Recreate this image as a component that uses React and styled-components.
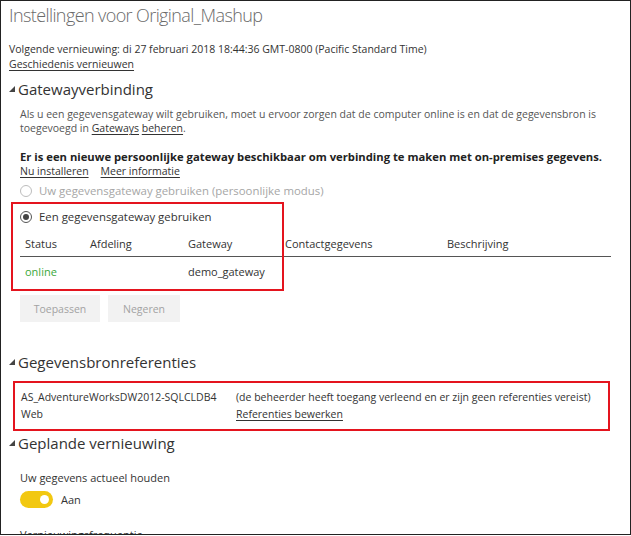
import React from "react";
import styled, { createGlobalStyle } from "styled-components";

const GlobalStyle = createGlobalStyle`
  html, body {
    margin: 0;
    padding: 0;
    background: #fff;
  }
  body {
    font-family: "Open Sans", "Noto Sans", sans-serif;
    color: #333;
  }
`;

const Frame = styled.div`
  box-sizing: border-box;
  width: 631px;
  height: 535px;
  border: 1px solid #222;
  overflow: hidden;
  padding: 0 0 0 8px;
  font-size: 10.5px;
  line-height: 15px;
`;

const Title = styled.h1`
  margin: 1px 0 0;
  font-size: 18px;
  font-weight: 300;
  letter-spacing: -0.6px;
  line-height: 26px;
  color: #6a6a6a;
`;

const Text = styled.div`
  color: ${p => p.$color || "#333"};
  font-weight: ${p => (p.$bold ? 700 : 400)};
  font-size: ${p => p.$size || "10.5px"};
  margin-top: ${p => p.$top || 0}px;
`;

const Link = styled.a`
  color: #333;
  text-decoration: underline;
  text-underline-offset: 2px;
  margin-right: ${p => p.$gap || 0}px;
  cursor: pointer;
`;

const Info = styled.div`
  margin-top: 14px;
`;

const Section = styled.section`
  position: relative;
  margin-top: ${p => p.$top || 0}px;
`;

const SectionHead = styled.h2`
  display: flex;
  align-items: center;
  gap: 3px;
  margin: 0;
  font-size: 15px;
  font-weight: 400;
  line-height: 20px;
  color: #333;
`;

const SectionBody = styled.div`
  padding-left: 11px;
`;

const Muted = styled.p`
  margin: 8px 0 0;
  color: #555;
  line-height: 14px;
`;

const Notice = styled.div`
  margin-top: 14px;
`;

const RadioRow = styled.label`
  display: flex;
  align-items: center;
  gap: 7px;
  margin-top: ${p => p.$top || 0}px;
  color: ${p => (p.$disabled ? "#a6a6a6" : "#333")};
  font-size: 11.4px;
`;

const RadioDot = styled.span`
  box-sizing: border-box;
  width: 12px;
  height: 12px;
  border-radius: 50%;
  border: 1px solid ${p => (p.$disabled ? "#bdbdbd" : "#555")};
  display: flex;
  align-items: center;
  justify-content: center;
  &::after {
    content: "";
    width: 6px;
    height: 6px;
    border-radius: 50%;
    background: ${p => (p.$checked ? "#444" : "transparent")};
  }
`;

const Table = styled.div`
  margin-top: 6px;
  width: 591px;
`;

const Row = styled.div`
  display: grid;
  grid-template-columns: 65px 98px 97px 162px 1fr;
  padding: 0 0 0 5px;
  height: ${p => (p.$head ? 26 : 28)}px;
  align-items: center;
  font-size: 11px;
  border-bottom: ${p => (p.$head ? "1px solid #555" : "none")};
  color: #333;
`;

const Online = styled.span`
  color: #3aa83a;
`;

const Buttons = styled.div`
  display: flex;
  gap: 8px;
  margin-top: 10px;
`;

const Button = styled.button`
  width: ${p => p.$w}px;
  height: 27px;
  border: none;
  background: #f2f2f2;
  color: #a3a3a3;
  font-family: inherit;
  font-size: 10.5px;
  padding: 0;
`;

const Highlight = styled.div`
  position: absolute;
  box-sizing: border-box;
  left: ${p => p.$left}px;
  top: ${p => p.$top}px;
  width: ${p => p.$w}px;
  height: ${p => p.$h}px;
  border: 2px solid #e4141e;
  pointer-events: none;
`;

const CredBox = styled.div`
  box-sizing: border-box;
  margin: 9px 0 0 4px;
  width: 597px;
  border: 2px solid #e4141e;
  padding: 7px 0 7px 6px;
  display: grid;
  grid-template-columns: 215px 1fr;
  row-gap: 2px;
  line-height: 15px;
`;

const Toggle = styled.span`
  box-sizing: border-box;
  width: 33px;
  height: 17px;
  border-radius: 9px;
  background: #f2c811;
  display: flex;
  align-items: center;
  justify-content: flex-end;
  padding-right: 4px;
  &::after {
    content: "";
    width: 9px;
    height: 9px;
    border-radius: 50%;
    background: #fff;
  }
`;

const ToggleRow = styled.div`
  display: flex;
  align-items: center;
  gap: 8px;
  margin-top: 6px;
  font-size: 11px;
`;

const Caret = () => (
  <svg width="6" height="6" viewBox="0 0 6 6">
    <path d="M6 0 L6 6 L0 6 Z" fill="#444" />
  </svg>
);

export default function App() {
  return (
    <>
      <GlobalStyle />
      <Frame>
        <Title>Instellingen voor Original_Mashup</Title>
        <Info>
          <Text>Volgende vernieuwing: di 27 februari 2018 18:44:36 GMT-0800 (Pacific Standard Time)</Text>
          <Link>Geschiedenis vernieuwen</Link>
        </Info>

        <Section $top={7}>
          <SectionHead>
            <Caret />
            Gatewayverbinding
          </SectionHead>
          <SectionBody>
            <Muted>
              Als u een gegevensgateway wilt gebruiken, moet u ervoor zorgen dat de computer online is en dat de gegevensbron is
              <br />
              toegevoegd in <Link>Gateways</Link> <Link>beheren</Link>.
            </Muted>
            <Notice>
              <Text $bold $color="#222" $size="11.25px">
                Er is een nieuwe persoonlijke gateway beschikbaar om verbinding te maken met on-premises gegevens.
              </Text>
              <div>
                <Link $gap={12}>Nu installeren</Link>
                <Link>Meer informatie</Link>
              </div>
            </Notice>
            <RadioRow $disabled $top={4}>
              <RadioDot $disabled />
              Uw gegevensgateway gebruiken (persoonlijke modus)
            </RadioRow>
            <RadioRow $top={11}>
              <RadioDot $checked />
              Een gegevensgateway gebruiken
            </RadioRow>
            <Table>
              <Row $head>
                <span>Status</span>
                <span>Afdeling</span>
                <span>Gateway</span>
                <span>Contactgegevens</span>
                <span>Beschrijving</span>
              </Row>
              <Row>
                <Online>online</Online>
                <span />
                <span>demo_gateway</span>
                <span />
                <span />
              </Row>
            </Table>
            <Buttons>
              <Button $w={80}>Toepassen</Button>
              <Button $w={72}>Negeren</Button>
            </Buttons>
          </SectionBody>
          <Highlight $left={2} $top={123} $w={273} $h={89} />
        </Section>

        <Section $top={30}>
          <SectionHead>
            <Caret />
            Gegevensbronreferenties
          </SectionHead>
          <CredBox>
            <span>AS_AdventureWorksDW2012-SQLCLDB4</span>
            <span>(de beheerder heeft toegang verleend en er zijn geen referenties vereist)</span>
            <span>Web</span>
            <span>
              <Link>Referenties bewerken</Link>
            </span>
          </CredBox>
        </Section>

        <Section $top={2}>
          <SectionHead>
            <Caret />
            Geplande vernieuwing
          </SectionHead>
          <SectionBody>
            <Text $size="11px" $top={17}>Uw gegevens actueel houden</Text>
            <ToggleRow>
              <Toggle />
              Aan
            </ToggleRow>
            <Text $size="11px" $top={19}>Vernieuwingsfrequentie</Text>
          </SectionBody>
        </Section>
      </Frame>
    </>
  );
}
